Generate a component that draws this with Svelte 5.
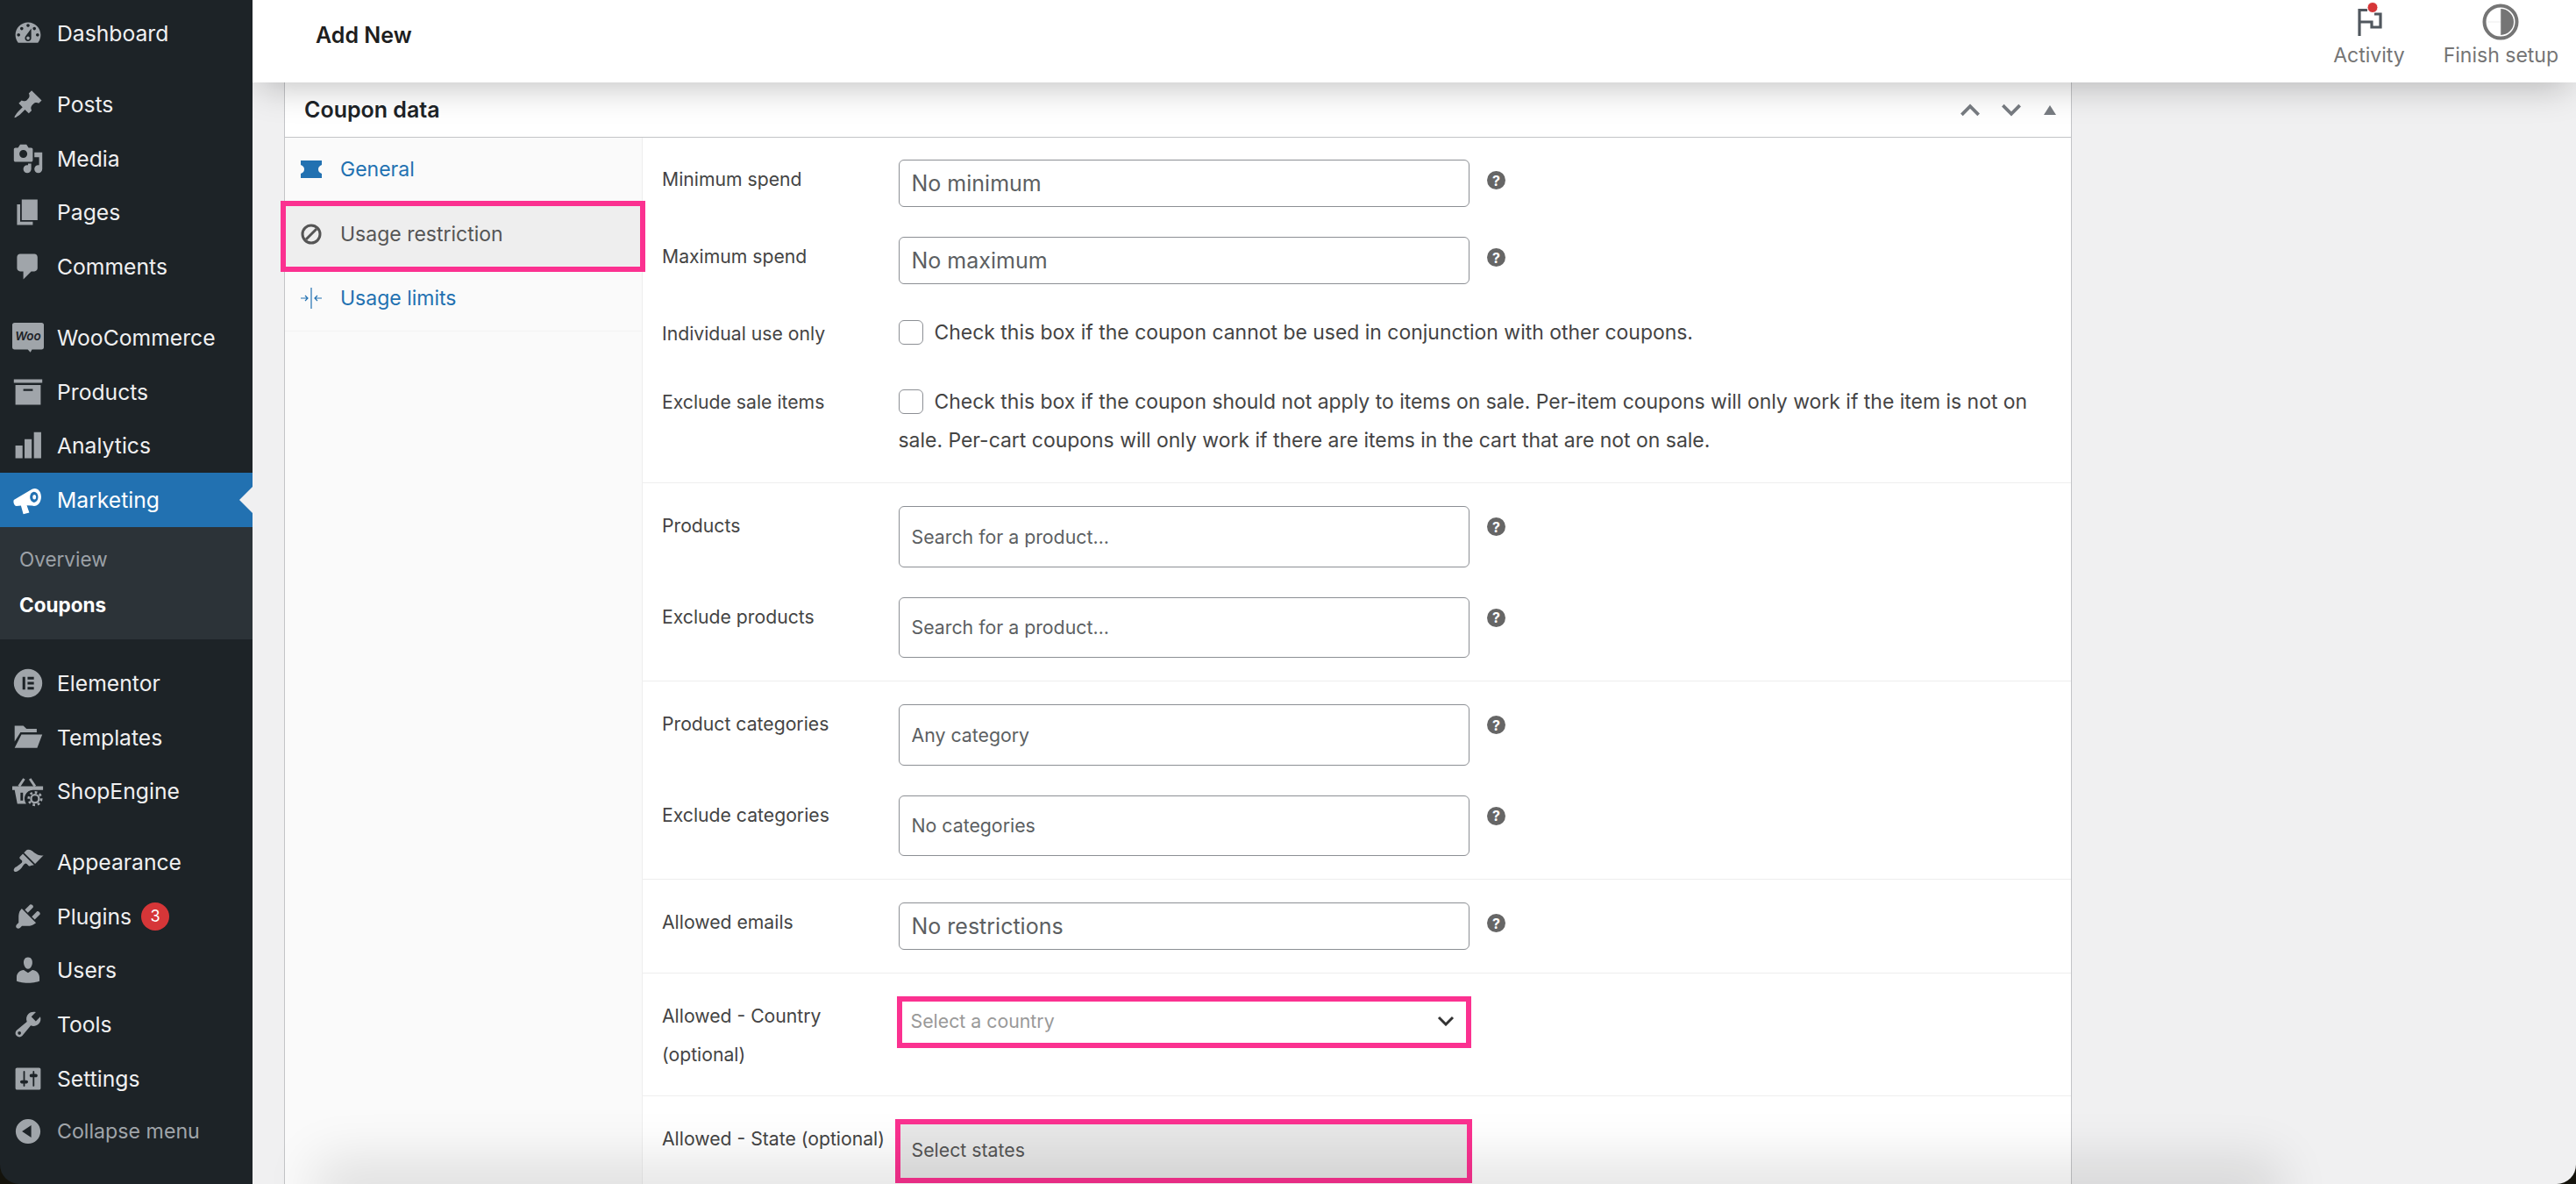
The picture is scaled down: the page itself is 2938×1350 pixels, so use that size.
<script>
  const paths = {
    dashboard: 'M3.76 16h12.48c1.1-1.37 1.76-3.11 1.76-5 0-4.42-3.58-8-8-8s-8 3.58-8 8c0 1.89.66 3.63 1.76 5zM10 4c.55 0 1 .45 1 1s-.45 1-1 1-1-.45-1-1 .45-1 1-1zM6 6c.55 0 1 .45 1 1s-.45 1-1 1-1-.45-1-1 .45-1 1-1zm8 0c.55 0 1 .45 1 1s-.45 1-1 1-1-.45-1-1 .45-1 1-1zm-5.37 5.55L12 7v6c0 1.1-.9 2-2 2s-2-.9-2-2c0-.57.24-1.08.63-1.45zM4 10c.55 0 1 .45 1 1s-.45 1-1 1-1-.45-1-1 .45-1 1-1zm12 0c.55 0 1 .45 1 1s-.45 1-1 1-1-.45-1-1 .45-1 1-1zm-5 3c0-.55-.45-1-1-1s-1 .45-1 1 .45 1 1 1 1-.45 1-1z',
    posts: 'M10.44 3.02l1.82-1.82 6.36 6.35-1.83 1.82c-1.05-.68-2.48-.57-3.41.36l-.75.75c-.92.93-1.04 2.35-.35 3.41l-1.83 1.82-2.41-2.41-2.8 2.79c-.42.42-3.38 2.71-3.8 2.29s1.86-3.39 2.28-3.81l2.79-2.79L4.1 9.36l1.83-1.82c1.05.69 2.48.57 3.4-.36l.75-.75c.93-.92 1.05-2.35.36-3.41z',
    media: 'M13 11V4c0-.55-.45-1-1-1h-1.67L9 1H5L3.67 3H2c-.55 0-1 .45-1 1v7c0 .55.45 1 1 1h10c.55 0 1-.45 1-1zM7 4.5c1.38 0 2.5 1.12 2.5 2.5S8.38 9.5 7 9.5 4.5 8.38 4.5 7 5.62 4.5 7 4.5zM14 6h5v10.5c0 1.38-1.12 2.5-2.5 2.5S14 17.88 14 16.5s1.12-2.5 2.5-2.5c.17 0 .34.02.5.05V9h-3V6zm-4 8.05V13h2v3.5c0 1.38-1.12 2.5-2.5 2.5S7 17.88 7 16.5 8.12 14 9.5 14c.17 0 .34.02.5.05z',
    pages: 'M6 15V2h10v13H6zm-1 1h8v2H3V5h2v11z',
    comments: 'M5 2h9c1.1 0 2 .9 2 2v7c0 1.1-.9 2-2 2h-2l-5 5v-5H5c-1.1 0-2-.9-2-2V4c0-1.1.9-2 2-2z',
    products: 'M19 2v2.2H1V2h18zM2 5.5h16V18H2V5.5zm5 2.6v1.2h6V8.100H7z',
    analytics: 'M2 10h4.500v8H2zM7.800 6h4.500v12H7.800zM13.700 1.500h4.600V18h-4.600z',
    elementor: 'M10 1a9 9 0 1 0 0 18 9 9 0 0 0 0-18zM6.500 6h1.700v8H6.500zM9.700 6h4v1.600h-4zM9.700 9.200h4v1.600h-4zM9.700 12.400h4V14h-4z',
    templates: 'M1.500 2.500h5.500l2 2h6.500v2.200H5.200L1.500 12.500zM5.800 8H19l-3.200 8.500H1.500z',
    appearance: 'M14.480 11.060L7.410 3.990l1.500-1.500c.5-.56 2.300-.47 3.510.32 1.210.8 1.430 1.280 2.910 2.100 1.180.64 2.450 1.260 4.450.85zm-.71.71L6.700 4.700 4.930 6.470c-.39.39-.39 1.020 0 1.410l1.060 1.060c.39.39.39 1.030 0 1.420-.6.6-1.430 1.110-2.210 1.690-.35.26-.7.53-1.010.84C1.430 13.230.4 14.930 1.300 15.830c.9.9 2.600-.13 3.940-1.470.31-.31.58-.66.85-1.010.58-.78 1.090-1.610 1.690-2.210.39-.39 1.020-.39 1.410 0l1.060 1.060c.39.39 1.020.39 1.410 0z',
    plugins: 'M13.110 4.360L9.870 7.600 8 5.730l3.240-3.240c.35-.34 1.050-.2 1.560.32.52.51.66 1.210.31 1.550zm-8 1.770l.91-1.120 9.010 9.010-1.190.84c-.71.71-2.630 1.160-3.820 1.160H6.140L4.900 17.260c-.59.59-1.540.59-2.120 0-.59-.58-.59-1.530 0-2.120l1.240-1.240v-3.880c0-1.130.4-3.190 1.090-3.890zm7.260 3.970l3.240-3.240c.34-.35 1.040-.21 1.550.31.52.51.66 1.210.31 1.550l-3.240 3.250z',
    users: 'M10 9.250c-2.270 0-2.730-3.440-2.730-3.440C7 4.020 7.820 2 9.970 2c2.160 0 2.980 2.020 2.710 3.810 0 0-.41 3.440-2.680 3.440zm0 2.570L12.720 10c2.390 0 4.520 2.330 4.520 4.530v2.490s-3.650 1.130-7.240 1.130c-3.650 0-7.240-1.130-7.240-1.130v-2.490c0-2.250 1.940-4.480 4.470-4.480z',
    tools: 'M16.680 9.770c-1.340 1.340-3.300 1.670-4.950.99l-5.410 6.520c-.99.99-2.590.99-3.580 0s-.99-2.590 0-3.570l6.520-5.420c-.68-1.650-.35-3.610.99-4.950 1.280-1.280 3.120-1.620 4.720-1.060l-2.890 2.890 2.820 2.820 2.860-2.870c.53 1.580.18 3.390-1.080 4.650zM3.810 16.210c.4.39 1.040.39 1.430 0 .4-.4.4-1.040 0-1.430-.39-.4-1.030-.4-1.430 0-.39.39-.39 1.030 0 1.430z',
    settings: 'M18 16V4c0-.55-.45-1-1-1H3c-.55 0-1 .45-1 1v12c0 .55.45 1 1 1h14c.55 0 1-.45 1-1zM8 11h1c.55 0 1 .45 1 1s-.45 1-1 1H8v1.500c0 .28-.22.5-.5.5s-.5-.22-.5-.5V13H6c-.55 0-1-.45-1-1s.45-1 1-1h1V5.500c0-.28.22-.5.5-.5s.5.22.5.5V11zm5-2h-1c-.55 0-1-.45-1-1s.45-1 1-1h1V5.500c0-.28.22-.5.5-.5s.5.22.5.5V7h1c.55 0 1 .45 1 1s-.45 1-1 1h-1v5.500c0 .28-.22.5-.5.5s-.5-.22-.5-.5V9z',
    collapse: 'M10 2.160c4.330 0 7.840 3.510 7.840 7.840s-3.510 7.840-7.840 7.840S2.160 14.330 2.160 10 5.710 2.160 10 2.160zm2 11.720V6.120L6.180 9.970z'
  };

  const groups = [
    [{ id: 'dashboard', label: 'Dashboard' }],
    [
      { id: 'posts', label: 'Posts' },
      { id: 'media', label: 'Media' },
      { id: 'pages', label: 'Pages' },
      { id: 'comments', label: 'Comments' }
    ],
    [
      { id: 'woo', label: 'WooCommerce' },
      { id: 'products', label: 'Products' },
      { id: 'analytics', label: 'Analytics' },
      { id: 'marketing', label: 'Marketing', active: true, sub: ['Overview', 'Coupons'] }
    ],
    [
      { id: 'elementor', label: 'Elementor' },
      { id: 'templates', label: 'Templates' },
      { id: 'shopengine', label: 'ShopEngine' }
    ],
    [
      { id: 'appearance', label: 'Appearance' },
      { id: 'plugins', label: 'Plugins', badge: 3 },
      { id: 'users', label: 'Users' },
      { id: 'tools', label: 'Tools' },
      { id: 'settings', label: 'Settings' }
    ]
  ];
</script>

<div class="window">
  <nav class="sidebar" aria-label="Main menu">
    {#each groups as group}
      <ul class="menu-group">
        {#each group as item}
          <li>
            <a href="#top" class="menu-item" class:is-active={item.active}>
              <svg class="menu-icon" viewBox="0 0 20 20" aria-hidden="true">
                {#if item.id === 'woo'}
                  <path d="M1.500 .5h17a1.500 1.500 0 0 1 1.500 1.500v14a1.500 1.500 0 0 1-1.500 1.500H12.500l-1 1.800-1.700-1.800H1.500A1.500 1.500 0 0 1 0 16v-14A1.500 1.500 0 0 1 1.500 .5z" />
                  <text x="10" y="11.500" text-anchor="middle" class="woo-text">Woo</text>
                {:else if item.id === 'marketing'}
                  <path d="M1 10L12.500 3.200c3-1.500 5.800 1 5.800 4.800s-2.800 6.800-5.800 5.600L9.200 13.500l1.600 4.500-3.800 1-1.500-5.400-2.800.3C1.200 14 .4 11.200 1 10z" />
                  <ellipse cx="13.800" cy="8.200" rx="2.600" ry="3.400" class="megaphone-eye" />
                  <ellipse cx="14" cy="8.200" rx="1.100" ry="1.500" />
                {:else if item.id === 'shopengine'}
                  <path d="M4.300 7L7.500 2.200M14.400 7L11.200 2.200" class="basket-handle" />
                  <path d="M0 7h19.500v2.300h-6.500a5.500 5.500 0 0 0-4.200 8.700H3.200L1.500 9.300H0z" />
                  <path d="M6 11v5" class="basket-bars" />
                  <circle cx="14.400" cy="14.800" r="2.500" class="basket-gear" />
                  <circle cx="14.400" cy="14.800" r="4" class="basket-teeth" />
                {:else}
                  <path d={paths[item.id]} fill-rule="evenodd" />
                {/if}
              </svg>
              <span>{item.label}</span>
              {#if item.badge}
                <span class="badge">{item.badge}</span>
              {/if}
            </a>
            {#if item.sub}
              <ul class="submenu">
                <li><a href="#top">{item.sub[0]}</a></li>
                <li><a href="#top" class="is-current">{item.sub[1]}</a></li>
              </ul>
            {/if}
          </li>
        {/each}
      </ul>
    {/each}
    <button type="button" class="collapse">
      <svg class="menu-icon" viewBox="0 0 20 20" aria-hidden="true"><path d={paths.collapse} fill-rule="evenodd" /></svg>
      <span>Collapse menu</span>
    </button>
  </nav>

  <div class="main">
    <header class="topbar">
      <h1>Add New</h1>
      <div class="top-actions">
        <div class="top-action">
          <svg class="flag" viewBox="0 0 30 38" aria-hidden="true">
            <path d="M4 37V7.500H13M4 21H18V27H28V12H21" class="flag-shape" />
            <circle cx="19" cy="4.500" r="6" class="flag-dot" />
          </svg>
          <span>Activity</span>
        </div>
        <div class="top-action">
          <svg class="progress" viewBox="0 0 42 42" aria-hidden="true">
            <circle cx="21" cy="21" r="18.500" class="progress-ring" />
            <path d="M21 6a15 15 0 0 1 0 30z" class="progress-fill" />
            <path d="M6 21h15M21 6v30" class="progress-line" />
          </svg>
          <span>Finish setup</span>
        </div>
      </div>
    </header>

    <div class="content">
      <section class="postbox">
        <div class="postbox-header">
          <h2>Coupon data</h2>
          <div class="postbox-controls">
            <svg viewBox="0 0 24 14" aria-hidden="true"><path d="M3 12l9-9 9 9" /></svg>
            <svg viewBox="0 0 24 14" aria-hidden="true"><path d="M3 2l9 9 9-9" /></svg>
            <span class="toggle-up"></span>
          </div>
        </div>

        <div class="coupon-body">
          <ul class="tabs">
            <li class="tab">
              <svg viewBox="0 0 24 22" aria-hidden="true"><path d="M0 1h24v5c-3 1-4 3-4 5s1 4 4 5v5H0v-5c3-1 4-3 4-5S3 7 0 6z" /></svg>
              General
            </li>
            <li class="tab is-current">
              <svg viewBox="0 0 24 24" aria-hidden="true"><circle cx="12" cy="12" r="10" class="line" /><path d="M6 18L18 6" class="line" /></svg>
              Usage restriction
            </li>
            <li class="tab">
              <svg viewBox="0 0 24 24" aria-hidden="true"><path d="M12 0v24M0 12h8M5 9l3 3-3 3M24 12h-8M19 9l-3 3 3 3" class="hair" /></svg>
              Usage limits
            </li>
          </ul>

          <div class="panel">
            <div class="section section-first">
              <div class="field">
                <span class="label">Minimum spend</span>
                <input class="text-input" placeholder="No minimum" />
                <span class="help">?</span>
              </div>
              <div class="field">
                <span class="label">Maximum spend</span>
                <input class="text-input" placeholder="No maximum" />
                <span class="help">?</span>
              </div>
              <div class="field field-check">
                <span class="label">Individual use only</span>
                <p class="check-text"><span class="checkbox"></span>Check this box if the coupon cannot be used in conjunction with other coupons.</p>
              </div>
              <div class="field field-check field-wrap">
                <span class="label">Exclude sale items</span>
                <p class="check-text"><span class="checkbox"></span>Check this box if the coupon should not apply to items on sale. Per-item coupons will only work if the item is not on sale. Per-cart coupons will only work if there are items in the cart that are not on sale.</p>
              </div>
            </div>

            <div class="section">
              <div class="field">
                <span class="label">Products</span>
                <input class="text-input search-input" placeholder="Search for a product…" />
                <span class="help">?</span>
              </div>
              <div class="field">
                <span class="label">Exclude products</span>
                <input class="text-input search-input" placeholder="Search for a product…" />
                <span class="help">?</span>
              </div>
            </div>

            <div class="section">
              <div class="field">
                <span class="label">Product categories</span>
                <input class="text-input search-input" placeholder="Any category" />
                <span class="help">?</span>
              </div>
              <div class="field">
                <span class="label">Exclude categories</span>
                <input class="text-input search-input" placeholder="No categories" />
                <span class="help">?</span>
              </div>
            </div>

            <div class="section">
              <div class="field">
                <span class="label">Allowed emails</span>
                <input class="text-input" placeholder="No restrictions" />
                <span class="help">?</span>
              </div>
            </div>

            <div class="section section-country">
              <div class="field">
                <span class="label">Allowed - Country<br />(optional)</span>
                <div class="select-country">
                  <span>Select a country</span>
                  <svg viewBox="0 0 20 12" aria-hidden="true"><path d="M2 2l8 8 8-8" /></svg>
                </div>
              </div>
            </div>

            <div class="section section-state">
              <div class="field">
                <span class="label">Allowed - State (optional)</span>
                <div class="select-state">Select states</div>
              </div>
            </div>
          </div>
        </div>
      </section>
      <div class="bottom-shade"></div>
    </div>
  </div>
</div>

<style>
  :global(body) {
    margin: 0;
    background: #14130c;
    font-family: "Inter", "Noto Sans", sans-serif;
  }

  .window {
    display: grid;
    grid-template-columns: 288px 1fr;
    height: 1350px;
    overflow: hidden;
  }

  .sidebar {
    display: flex;
    flex-direction: column;
    gap: 19.6px;
    padding-top: 7px;
    background: #1d2327;
    border-bottom-left-radius: 22px;
    box-sizing: border-box;
    height: 1350px;
  }

  .sidebar ul {
    margin: 0;
    padding: 0;
    list-style: none;
  }

  .menu-item {
    position: relative;
    display: flex;
    align-items: center;
    height: 61.600px;
    color: #f0f0f1;
    font-size: 24.7px;
    text-decoration: none;
  }

  .menu-icon {
    flex: none;
    width: 36px;
    height: 36px;
    margin: 0 15px 0 14px;
    fill: #a0a5aa;
  }

  .menu-item.is-active {
    background: #2271b1;
    color: #fff;
  }

  .is-active .menu-icon {
    fill: #fff;
  }

  .megaphone-eye {
    fill: #2271b1;
  }

  .is-active::after {
    content: "";
    position: absolute;
    right: 0;
    top: 16px;
    border: 15px solid transparent;
    border-left: 0;
    border-right-color: #f0f0f1;
  }

  .woo-text {
    fill: #1d2327;
    font-size: 7.500px;
    font-weight: 600;
    font-style: italic;
  }

  .basket-handle,
  .basket-bars {
    fill: none;
    stroke-width: 1.600;
  }

  .basket-handle {
    stroke: #a0a5aa;
  }

  .basket-bars {
    stroke: #1d2327;
  }

  .basket-gear {
    fill: none;
    stroke: #a0a5aa;
    stroke-width: 1.300;
  }

  .basket-teeth {
    fill: none;
    stroke: #a0a5aa;
    stroke-width: 1.500;
    stroke-dasharray: 1.500 1.600;
  }

  .badge {
    display: flex;
    align-items: center;
    justify-content: center;
    width: 32px;
    height: 32px;
    margin-left: 11px;
    border-radius: 50%;
    background: #d63638;
    color: #fff;
    font-size: 18px;
  }

  .sidebar .submenu {
    padding: 11px 0 13px;
    background: #2c3338;
  }

  .submenu a {
    display: flex;
    align-items: center;
    height: 52px;
    padding-left: 22px;
    color: #9ca1a7;
    font-size: 22.5px;
    text-decoration: none;
  }

  .submenu a.is-current {
    color: #fff;
    font-weight: 700;
  }

  .collapse {
    display: flex;
    align-items: center;
    height: 60px;
    margin-top: -20px;
    padding: 0;
    border: 0;
    background: none;
    color: #a0a5aa;
    font: inherit;
    font-size: 23.2px;
  }

  .main {
    position: relative;
    display: flex;
    flex-direction: column;
    min-width: 0;
    height: 1350px;
    overflow: hidden;
    background: #f0f0f1;
    border-bottom-right-radius: 22px;
  }

  .topbar {
    position: relative;
    z-index: 2;
    display: flex;
    flex: none;
    align-items: center;
    justify-content: space-between;
    height: 94px;
    padding-left: 72px;
    background: #fff;
    box-shadow: 0 12px 40px -8px rgba(0, 0, 0, 0.26);
  }

  .topbar h1 {
    margin: 0 0 14px;
    color: #1e1e1e;
    font-size: 25px;
    font-weight: 600;
  }

  .top-actions {
    display: flex;
    gap: 44px;
    padding-right: 20px;
  }

  .top-action {
    display: flex;
    flex-direction: column;
    align-items: center;
    height: 94px;
    color: #757575;
    font-size: 23px;
  }

  .flag {
    width: 30px;
    height: 38px;
    margin-top: 4px;
    margin-bottom: 7px;
    overflow: visible;
  }

  .flag-shape {
    fill: none;
    stroke: #50575e;
    stroke-width: 3.200;
  }

  .flag-dot {
    fill: #d63638;
    stroke: #fff;
    stroke-width: 1;
  }

  .progress {
    width: 42px;
    height: 42px;
    margin-top: 4px;
    margin-bottom: 3px;
  }

  .progress-ring {
    fill: #fff;
    stroke: #757575;
    stroke-width: 4;
  }

  .progress-fill {
    fill: #757575;
  }

  .progress-line {
    fill: none;
    stroke: #e0e0e0;
    stroke-width: 0.600;
  }

  .content {
    position: relative;
    flex: 1;
    min-height: 0;
    padding-left: 36px;
  }

  .postbox {
    width: 2039px;
    box-sizing: border-box;
    border: solid #c3c4c7;
    border-width: 0 1px;
    background: #fff;
    height: 100%;
  }

  .postbox-header {
    display: flex;
    align-items: center;
    justify-content: space-between;
    box-sizing: border-box;
    height: 63px;
    padding: 0 17px 0 22px;
    border-bottom: 1px solid #c3c4c7;
  }

  .postbox-header h2 {
    margin: 0;
    color: #1d2327;
    font-size: 25px;
    font-weight: 600;
  }

  .postbox-controls {
    display: flex;
    align-items: center;
    gap: 21px;
  }

  .postbox-controls svg {
    width: 26px;
    height: 15px;
    fill: none;
    stroke: #787c82;
    stroke-width: 3.500;
  }

  .toggle-up {
    width: 0;
    margin-left: 3px;
    border: 7px solid transparent;
    border-top: 0;
    border-bottom: 11px solid #787c82;
  }

  .coupon-body {
    display: grid;
    grid-template-columns: 408px 1fr;
    height: calc(100% - 63px);
  }

  .tabs {
    margin: 0;
    padding: 0;
    list-style: none;
    background: #fafafa;
    border-right: 1px solid #eee;
  }

  .tab {
    position: relative;
    display: flex;
    align-items: center;
    gap: 21px;
    box-sizing: border-box;
    height: 73.500px;
    padding-left: 18px;
    color: #2271b1;
    font-size: 23px;
    border-bottom: 1px solid #f3f3f3;
    fill: #2271b1;
  }

  .tab svg {
    width: 24px;
    height: 24px;
    flex: none;
  }

  .tab .line,
  .tab .hair {
    fill: none;
    stroke: #555;
    stroke-width: 3;
  }

  .tab .hair {
    stroke: #2271b1;
    stroke-width: 1.200;
  }

  .tab.is-current {
    background: #eee;
    color: #555;
  }

  .tab.is-current::after {
    content: "";
    position: absolute;
    inset: -2px -4px -7px -5px;
    border: 6px solid #fb3190;
  }

  .panel {
    min-width: 0;
  }

  .section {
    padding: 9px 0;
    border-bottom: 1px solid #eee;
  }

  .section-first {
    padding-top: 8px;
    padding-bottom: 0;
  }

  .section-country {
    padding-bottom: 8px;
  }

  .section-state {
    padding: 9px 0 0;
    border: 0;
  }

  .field {
    display: flex;
    align-items: flex-start;
    padding: 17px 0 17px 22px;
  }

  .label {
    flex: none;
    width: 269.500px;
    color: #444;
    font-size: 21.2px;
    line-height: 44px;
  }

  .text-input {
    flex: none;
    width: 651.500px;
    height: 54px;
    box-sizing: border-box;
    margin: 0;
    padding: 0 14px;
    border: 1px solid #8c8f94;
    border-radius: 6px;
    background: #fff;
    font-family: inherit;
    font-size: 25px;
  }

  .text-input::placeholder {
    color: #5c5f62;
    opacity: 1;
  }

  .search-input {
    height: 69.500px;
    font-size: 21.3px;
  }

  .help {
    display: flex;
    align-items: center;
    justify-content: center;
    width: 21px;
    height: 21px;
    margin: 13px 0 0 20px;
    border-radius: 50%;
    background: #666;
    color: #fff;
    font-size: 16px;
    font-weight: 700;
  }

  .field-check {
    box-sizing: border-box;
    height: 78px;
    padding: 25px 0 0 22px;
  }

  .field-wrap {
    height: 131px;
    padding: 17px 0 0 22px;
  }

  .field-check .label {
    margin-top: -8px;
  }

  .field-wrap .label {
    margin-top: 0;
  }

  .check-text {
    flex: none;
    width: 1312px;
    margin: -9px 0 0;
    color: #444;
    font-size: 22.95px;
    line-height: 44px;
  }

  .field-wrap .check-text {
    margin-top: 0;
  }

  .checkbox {
    display: inline-block;
    vertical-align: -6px;
    box-sizing: border-box;
    width: 28px;
    height: 28px;
    margin-right: 13px;
    border: 1px solid #8c8f94;
    border-radius: 6px;
    background: #fff;
  }

  .select-country {
    display: flex;
    flex: none;
    align-items: center;
    justify-content: space-between;
    box-sizing: border-box;
    width: 655px;
    height: 59px;
    margin-left: -2px;
    padding: 0 13px 4px 10px;
    border: 6px solid #fb3190;
    background: #fff;
    color: #999;
    font-size: 21.3px;
  }

  .select-country svg {
    width: 20px;
    height: 12px;
    fill: none;
    stroke: #333;
    stroke-width: 3;
  }

  .select-state {
    flex: none;
    box-sizing: border-box;
    width: 658px;
    height: 73px;
    margin-left: -4px;
    padding: 16px 13px 0;
    border: 6px solid #fb3190;
    background: #e8e8e8;
    color: #555;
    font-size: 21.3px;
  }

  .bottom-shade {
    position: absolute;
    z-index: 1;
    left: 92px;
    right: 358px;
    bottom: -30px;
    height: 30px;
    box-shadow: 0 -8px 60px 20px rgba(0, 0, 0, 0.11);
  }
</style>
